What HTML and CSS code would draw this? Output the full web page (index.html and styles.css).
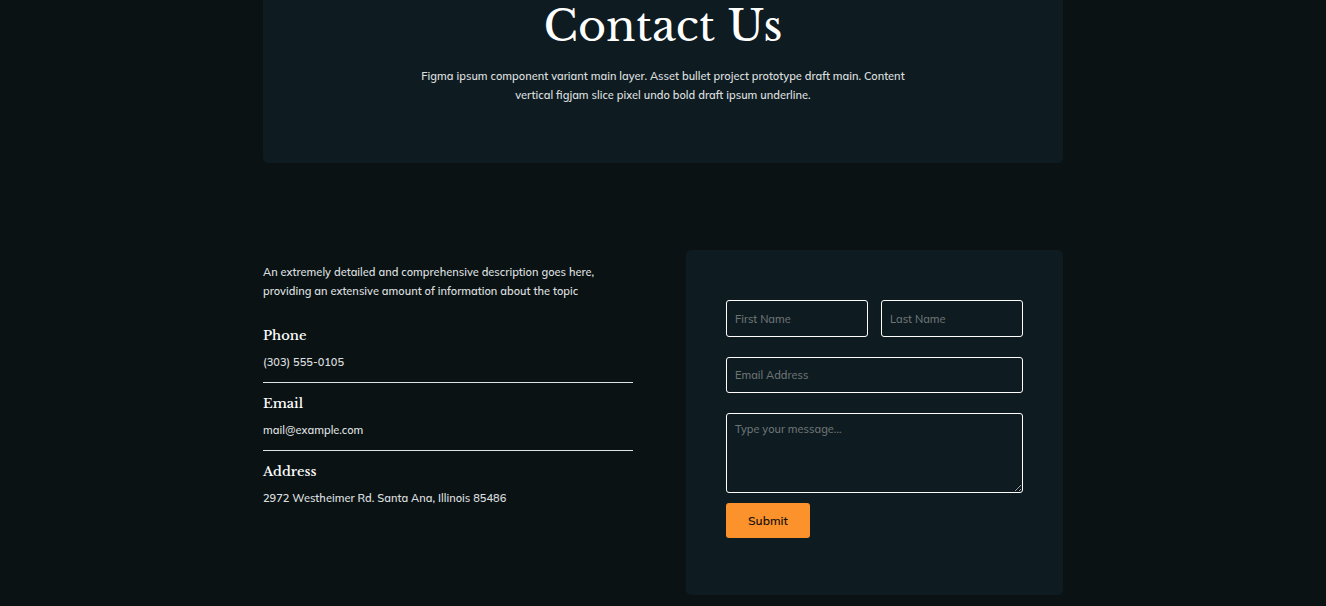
FILE: index.html
```html
<!DOCTYPE html>
<html lang="en">
<head>
<meta charset="utf-8">
<meta name="viewport" content="width=device-width, initial-scale=1">
<title>Contact Us</title>
<link rel="stylesheet" href="styles.css">
</head>
<body>
<main class="page">
  <header class="hero">
    <h1 class="hero-title">Contact Us</h1>
    <p class="hero-text">Figma ipsum component variant main layer. Asset bullet project prototype draft main. Content vertical figjam slice pixel undo bold draft ipsum underline.</p>
  </header>
  <div class="contact">
    <section class="info">
      <p class="info-intro">An extremely detailed and comprehensive description goes here, providing an extensive amount of information about the topic</p>
      <div class="info-item">
        <h2 class="info-title">Phone</h2>
        <p class="info-value">(303) 555-0105</p>
      </div>
      <div class="info-item">
        <h2 class="info-title">Email</h2>
        <p class="info-value">mail@example.com</p>
      </div>
      <div class="info-item">
        <h2 class="info-title">Address</h2>
        <p class="info-value">2972 Westheimer Rd. Santa Ana, Illinois 85486</p>
      </div>
    </section>
    <form class="form">
      <div class="form-row">
        <input class="field" type="text" placeholder="First Name" aria-label="First Name">
        <input class="field" type="text" placeholder="Last Name" aria-label="Last Name">
      </div>
      <input class="field" type="email" placeholder="Email Address" aria-label="Email Address">
      <textarea class="field field-message" placeholder="Type your message..." aria-label="Message"></textarea>
      <button class="submit" type="submit">Submit</button>
    </form>
  </div>
</main>
</body>
</html>
```

FILE: styles.css
```css
* {
  box-sizing: border-box;
}

body {
  margin: 0;
  background: #0a1214;
  color: #d8dcdd;
  font-family: Mulish, Lato, sans-serif;
  font-size: 11px;
  font-weight: 600;
  line-height: 19px;
}

h1,
h2,
p {
  margin: 0;
}

.page {
  max-width: 800px;
  margin: 0 auto;
  padding-bottom: 11px;
}

.hero {
  display: flex;
  flex-direction: column;
  align-items: center;
  gap: 14px;
  padding-bottom: 58px;
  border-radius: 0 0 5px 5px;
  background: #0e1b20;
  text-align: center;
}

.hero-title {
  color: #fff;
  font-family: "Libre Baskerville", "Liberation Serif", serif;
  font-size: 43px;
  font-weight: 400;
  line-height: 53px;
}

.hero-text {
  max-width: 500px;
}

.contact {
  display: grid;
  grid-template-columns: 370fr 377fr;
  gap: 53px;
  margin-top: 87px;
}

.info {
  padding-top: 13px;
}

.info-intro {
  max-width: 350px;
  margin-bottom: 24px;
}

.info-item {
  padding-bottom: 10px;
}

.info-item + .info-item {
  padding-top: 10px;
  border-top: 1px solid #dfe3e4;
}

.info-title {
  margin-bottom: 7px;
  color: #fff;
  font-family: "Libre Baskerville", "Liberation Serif", serif;
  font-size: 13px;
  font-weight: 500;
  line-height: 21px;
}

.form {
  display: flex;
  flex-direction: column;
  padding: 50px 40px 57px;
  border-radius: 5px;
  background: #0e1b20;
}

.form-row {
  display: grid;
  grid-template-columns: 1fr 1fr;
  gap: 13px;
}

.field {
  width: 100%;
  height: 36px;
  margin: 0 0 20px;
  padding: 8px;
  border: 1px solid #fff;
  border-radius: 3px;
  background: transparent;
  color: #fff;
  font: inherit;
  font-weight: 500;
}

.form-row .field {
  height: 37px;
}

.field::placeholder {
  color: #6d7476;
}

.field-message {
  height: 80px;
  margin-bottom: 10px;
  padding-top: 6px;
  resize: vertical;
}

.submit {
  align-self: flex-start;
  padding: 8px 22px;
  border: 0;
  border-radius: 3px;
  background: #fb922c;
  color: #1c1209;
  font: inherit;
  font-size: 12px;
}
```
